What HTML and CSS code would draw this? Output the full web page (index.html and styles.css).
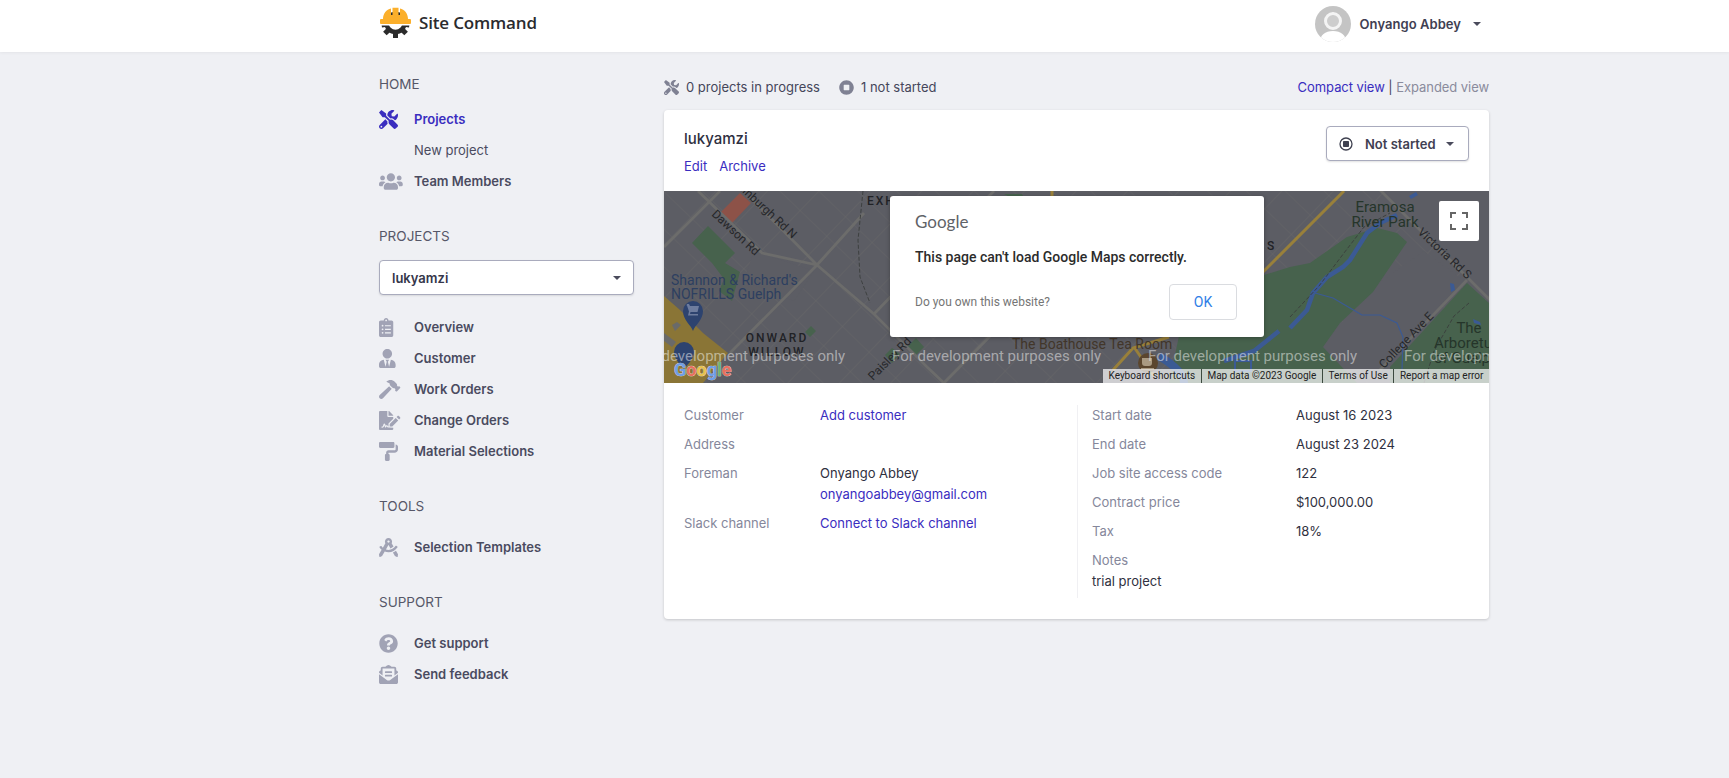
FILE: index.html
```html
<!DOCTYPE html>
<html lang="en">
<head>
  <meta charset="UTF-8" />
  <meta name="viewport" content="width=device-width, initial-scale=1.0" />
  <title>Site Command</title>
  <link rel="stylesheet" href="styles.css">
</head>
<body>
  <!-- icon sprite -->
  <svg class="sprite" xmlns="http://www.w3.org/2000/svg">
    <symbol id="i-tools" viewBox="0 0 512 512" preserveAspectRatio="xMinYMid meet"><path d="M501.1 395.7L384 278.6c-23.1-23.1-57.6-27.6-85.4-13.9L192 158.1V96L64 0 0 64l96 128h62.1l106.6 106.6c-13.6 27.8-9.2 62.3 13.9 85.4l117.1 117.1c14.6 14.6 38.2 14.6 52.7 0l52.7-52.7c14.5-14.6 14.5-38.2 0-52.7zM331.7 225c28.3 0 54.9 11 74.9 31l19.4 19.4c15.8-6.9 30.8-16.5 43.8-29.5 37.1-37.1 49.7-89.3 37.9-136.7-2.2-9-13.5-12.1-20.1-5.5l-74.4 74.4-67.9-11.3L334 98.9l74.4-74.4c6.6-6.6 3.4-17.9-5.7-20.2-47.4-11.7-99.6.9-136.6 37.9-28.5 28.5-41.9 66.1-41.2 103.6l82.1 82.1c8.1-1.9 16.5-2.9 24.7-2.9zm-103.9 82l-56.7-56.7L18.7 402.8c-25 25-25 65.5 0 90.5s65.5 25 90.5 0l123.6-123.6c-7.6-19.9-9.9-41.6-5-62.7zM64 472c-13.2 0-24-10.8-24-24 0-13.3 10.7-24 24-24s24 10.7 24 24c0 13.2-10.7 24-24 24z"/></symbol>
    <symbol id="i-users" viewBox="0 0 640 512" preserveAspectRatio="xMinYMid meet"><path d="M96 224c35.3 0 64-28.7 64-64s-28.7-64-64-64-64 28.7-64 64 28.7 64 64 64zm448 0c35.3 0 64-28.7 64-64s-28.7-64-64-64-64 28.7-64 64 28.7 64 64 64zm32 32h-64c-17.6 0-33.5 7.1-45.1 18.6 40.3 22.1 68.9 62 75.1 109.4h66c17.7 0 32-14.3 32-32v-32c0-35.3-28.7-64-64-64zm-256 0c61.9 0 112-50.1 112-112S381.9 32 320 32 208 82.1 208 144s50.1 112 112 112zm76.8 32h-8.3c-20.8 10-43.9 16-68.5 16s-47.6-6-68.5-16h-8.3C179.6 288 128 339.6 128 403.2V432c0 26.5 21.5 48 48 48h288c26.5 0 48-21.5 48-48v-28.8c0-63.6-51.6-115.2-115.2-115.2zm-223.7-13.4C161.5 263.1 145.6 256 128 256H64c-35.3 0-64 28.7-64 64v32c0 17.7 14.3 32 32 32h65.9c6.3-47.4 34.9-87.3 75.2-109.4z"/></symbol>
    <symbol id="i-clipboard" viewBox="0 0 384 512" preserveAspectRatio="xMinYMid meet"><path d="M336 64h-80c0-35.3-28.7-64-64-64s-64 28.7-64 64H48C21.5 64 0 85.5 0 112v352c0 26.5 21.5 48 48 48h288c26.5 0 48-21.5 48-48V112c0-26.5-21.5-48-48-48zM96 424c-13.3 0-24-10.7-24-24s10.7-24 24-24 24 10.7 24 24-10.7 24-24 24zm0-96c-13.3 0-24-10.7-24-24s10.7-24 24-24 24 10.7 24 24-10.7 24-24 24zm0-96c-13.3 0-24-10.7-24-24s10.7-24 24-24 24 10.7 24 24-10.7 24-24 24zm96-192c13.3 0 24 10.7 24 24s-10.7 24-24 24-24-10.7-24-24 10.7-24 24-24zm128 368c0 4.4-3.6 8-8 8H168c-4.4 0-8-3.6-8-8v-16c0-4.4 3.6-8 8-8h144c4.4 0 8 3.6 8 8v16zm0-96c0 4.4-3.6 8-8 8H168c-4.4 0-8-3.6-8-8v-16c0-4.4 3.6-8 8-8h144c4.4 0 8 3.6 8 8v16zm0-96c0 4.4-3.6 8-8 8H168c-4.4 0-8-3.6-8-8v-16c0-4.4 3.6-8 8-8h144c4.4 0 8 3.6 8 8v16z"/></symbol>
    <symbol id="i-user-tie" viewBox="0 0 448 512" preserveAspectRatio="xMinYMid meet"><path d="M224 256c70.7 0 128-57.3 128-128S294.7 0 224 0 96 57.3 96 128s57.3 128 128 128zm95.8 32.6L272 480l-32-136 32-56h-96l32 56-32 136-47.8-191.4C56.9 292 0 350.3 0 422.4V464c0 26.5 21.5 48 48 48h352c26.5 0 48-21.5 48-48v-41.6c0-72.1-56.9-130.4-128.2-133.8z"/></symbol>
    <symbol id="i-hammer" viewBox="0 0 576 512" preserveAspectRatio="xMinYMid meet"><path d="M571.31 193.94l-22.63-22.63c-6.25-6.25-16.38-6.25-22.63 0l-11.31 11.31-28.9-28.9c5.63-21.31.36-44.9-16.35-61.61l-45.25-45.25c-62.48-62.48-163.79-62.48-226.28 0l90.51 45.25v18.75c0 16.97 6.74 33.25 18.75 45.25l49.14 49.14c16.71 16.71 40.3 21.98 61.61 16.35l28.9 28.9-11.31 11.31c-6.25 6.25-6.25 16.38 0 22.63l22.63 22.63c6.25 6.25 16.38 6.25 22.63 0l90.51-90.51c6.23-6.24 6.23-16.37-.02-22.62zm-286.72-15.2c-3.7-3.7-6.84-7.79-9.85-11.95L19.64 404.96c-25.57 23.88-26.26 64.19-1.53 88.93s65.05 24.05 88.93-1.53l238.13-255.07c-3.96-2.91-7.9-5.87-11.44-9.41l-49.14-49.14z"/></symbol>
    <symbol id="i-file-sign" viewBox="0 0 576 512" preserveAspectRatio="xMinYMid meet"><path d="M218.17 424.14c-2.95-5.92-8.09-6.52-10.17-6.52s-7.22.59-10.02 6.19l-7.67 15.34c-6.37 12.78-25.03 11.37-29.48-2.09L144 386.59l-10.61 31.88c-5.89 17.66-22.38 29.53-41 29.53H80c-8.84 0-16-7.16-16-16s7.16-16 16-16h12.39c4.83 0 9.11-3.08 10.64-7.66l18.19-54.64c3.3-9.81 12.44-16.41 22.78-16.41s19.48 6.59 22.77 16.41l13.88 41.64c19.75-16.19 54.06-9.7 66 14.16 1.89 3.78 5.49 5.95 9.36 6.26v-82.12l128-127.09V160H248c-13.2 0-24-10.8-24-24V0H24C10.7 0 0 10.7 0 24v464c0 13.3 10.7 24 24 24h336c13.3 0 24-10.7 24-24v-40l-128-.11c-16.12-.31-30.58-9.28-37.83-23.75zM384 121.9c0-6.3-2.5-12.4-7-16.9L279.1 7c-4.5-4.5-10.6-7-17-7H256v128h128v-6.1zm-96 225.06V416h68.99l161.68-162.78-67.88-67.88L288 346.96zm280.54-179.63l-31.87-31.87c-9.94-9.94-26.07-9.94-36.01 0l-27.25 27.25 67.88 67.88 27.25-27.25c9.95-9.94 9.95-26.07 0-36.01z"/></symbol>
    <symbol id="i-roller" viewBox="0 0 512 512" preserveAspectRatio="xMinYMid meet"><path d="M416 128V32c0-17.67-14.33-32-32-32H32C14.33 0 0 14.33 0 32v96c0 17.67 14.33 32 32 32h352c17.67 0 32-14.33 32-32zm32-64v128c0 17.67-14.33 32-32 32H256c-35.35 0-64 28.65-64 64v32c-17.67 0-32 14.33-32 32v128c0 17.67 14.33 32 32 32h64c17.67 0 32-14.33 32-32V352c0-17.67-14.33-32-32-32v-32h160c53.02 0 96-42.98 96-96v-64c0-35.35-28.65-64-64-64z"/></symbol>
    <symbol id="i-compass" viewBox="0 0 512 512" preserveAspectRatio="xMinYMid meet"><path d="M457.01 344.42c-25.05 20.33-52.63 37.18-82.54 49.05l54.38 94.19 53.95 23.04c9.81 4.19 20.89-2.21 22.17-12.8l7.02-58.25-54.98-95.23zm42.49-94.56c4.86-7.67 1.89-17.99-6.05-22.39l-28.07-15.57c-7.48-4.15-16.61-1.46-21.26 5.72C403.01 281.15 332.25 320 256 320c-23.93 0-47.23-4.25-69.41-11.53l67.36-116.68c.7.02 1.34.21 2.04.21s1.35-.19 2.04-.21l51.09 88.5c31.23-8.96 59.56-25.75 82.61-48.92l-51.79-89.71C347.39 128.03 352 112.63 352 96c0-53.02-42.98-96-96-96s-96 42.98-96 96c0 16.63 4.61 32.03 12.05 45.66l-68.3 118.31c-12.55-11.61-23.96-24.59-33.68-39-4.79-7.1-13.97-9.62-21.38-5.33l-27.75 16.07c-7.85 4.54-10.63 14.9-5.64 22.47 15.57 23.64 34.69 44.21 55.98 62.02L0 439.66l7.02 58.25c1.28 10.59 12.36 16.99 22.17 12.8l53.95-23.04 70.8-122.63C186.13 377.99 220.62 384 256 384c99.05 0 190.88-51.01 243.5-134.14zM256 64c17.67 0 32 14.33 32 32s-14.33 32-32 32-32-14.33-32-32 14.33-32 32-32z"/></symbol>
    <symbol id="i-question" viewBox="0 0 512 512" preserveAspectRatio="xMinYMid meet"><path d="M504 256c0 136.997-111.043 248-248 248S8 392.997 8 256C8 119.083 119.043 8 256 8s248 111.083 248 248zM262.655 90c-54.497 0-89.255 22.957-116.549 63.758-3.536 5.286-2.353 12.415 2.715 16.258l34.699 26.31c5.205 3.947 12.621 3.008 16.665-2.122 17.864-22.658 30.113-35.797 57.303-35.797 20.429 0 45.698 13.148 45.698 32.958 0 14.976-12.363 22.667-32.534 33.976C247.128 238.528 216 254.941 216 296v4c0 6.627 5.373 12 12 12h56c6.627 0 12-5.373 12-12v-1.333c0-28.462 83.186-29.647 83.186-106.667 0-58.002-60.165-102-116.531-102zM256 338c-25.365 0-46 20.635-46 46 0 25.364 20.635 46 46 46s46-20.636 46-46c0-25.365-20.635-46-46-46z"/></symbol>
    <symbol id="i-envelope" viewBox="0 0 512 512" preserveAspectRatio="xMinYMid meet"><path d="M176 216h160c8.84 0 16-7.16 16-16v-16c0-8.84-7.16-16-16-16H176c-8.84 0-16 7.16-16 16v16c0 8.84 7.16 16 16 16zm-16 80c0 8.84 7.16 16 16 16h160c8.84 0 16-7.16 16-16v-16c0-8.84-7.16-16-16-16H176c-8.84 0-16 7.16-16 16v16zm96 121.13c-16.42 0-32.84-5.06-46.86-15.19L0 250.86V464c0 26.51 21.49 48 48 48h416c26.51 0 48-21.49 48-48V250.86L302.86 401.94c-14.02 10.12-30.44 15.19-46.86 15.19zm237.61-254.18c-8.85-6.94-17.24-13.47-29.61-22.81V96c0-26.51-21.49-48-48-48h-77.55c-3.04-2.2-5.87-4.26-9.04-6.56C312.6 29.17 279.2-.35 256 0c-23.2-.35-56.59 29.17-73.41 41.44-3.17 2.3-6 4.36-9.04 6.56H96c-26.51 0-48 21.49-48 48v44.14c-12.37 9.33-20.76 15.87-29.61 22.81A47.995 47.995 0 0 0 0 200.72v10.65l96 69.35V96h320v184.72l96-69.35v-10.65c0-14.74-6.78-28.67-18.39-37.77z"/></symbol>
    <symbol id="i-stop" viewBox="0 0 512 512" preserveAspectRatio="xMinYMid meet"><path d="M256 8C119 8 8 119 8 256s111 248 248 248 248-111 248-248S393 8 256 8zm96 328c0 8.8-7.2 16-16 16H176c-8.8 0-16-7.2-16-16V176c0-8.8 7.2-16 16-16h160c8.8 0 16 7.2 16 16v160z"/></symbol>
  </svg>

  <header class="topbar">
    <div class="topbar-inner">
      <a class="brand" href="#">
        <svg class="brand-logo" viewBox="0 0 31 31">
          <circle cx="15.5" cy="16" r="9" fill="none" stroke="#2b2b2b" stroke-width="4.500"/>
          <g fill="#2b2b2b">
            <rect x="13" y="25" width="5" height="6"/>
            <rect x="13" y="25" width="5" height="6" transform="rotate(45 15.5 16)"/>
            <rect x="13" y="25" width="5" height="6" transform="rotate(-45 15.5 16)"/>
            <rect x="13" y="25" width="5" height="5" transform="rotate(82 15.5 16)"/>
            <rect x="13" y="25" width="5" height="5" transform="rotate(-82 15.5 16)"/>
          </g>
          <rect x="0" y="17" width="31" height="1.500" fill="#fff"/>
          <path d="M3 12C3 6.500 6.500 2.500 11 1.500V8h1.500V.8h6V8H20V1.500C24.500 2.500 28 6.500 28 12z" fill="#fbaf2b"/>
          <rect x="0" y="12" width="31" height="5" rx="1" fill="#fbaf2b"/>
        </svg>
        <span>Site Command</span>
      </a>
      <div class="user">
        <svg class="avatar" viewBox="0 0 36 36">
          <clipPath id="avatar-clip"><circle cx="18" cy="18" r="18"/></clipPath>
          <g clip-path="url(#avatar-clip)">
            <rect width="36" height="36" fill="#c4c4c4"/>
            <path d="M5 36c0-7 5-11 13-11s13 4 13 11z" fill="#fff"/>
            <circle cx="18" cy="15" r="7.500" fill="#cdcdcd" stroke="#f4f4f4" stroke-width="3"/>
          </g>
        </svg>
        <span class="user-name">Onyango Abbey</span>
        <span class="caret"></span>
      </div>
    </div>
  </header>

  <div class="layout">
    <aside class="sidebar">
      <h4 class="side-title first">HOME</h4>
      <a class="side-link active" href="#"><svg class="side-icon"><use href="#i-tools"/></svg>Projects</a>
      <a class="side-link sub" href="#">New project</a>
      <a class="side-link" href="#"><svg class="side-icon"><use href="#i-users"/></svg>Team Members</a>

      <h4 class="side-title">PROJECTS</h4>
      <div class="project-select"><span>lukyamzi</span><span class="caret"></span></div>
      <a class="side-link" href="#"><svg class="side-icon"><use href="#i-clipboard"/></svg>Overview</a>
      <a class="side-link" href="#"><svg class="side-icon"><use href="#i-user-tie"/></svg>Customer</a>
      <a class="side-link" href="#"><svg class="side-icon"><use href="#i-hammer"/></svg>Work Orders</a>
      <a class="side-link" href="#"><svg class="side-icon"><use href="#i-file-sign"/></svg>Change Orders</a>
      <a class="side-link" href="#"><svg class="side-icon"><use href="#i-roller"/></svg>Material Selections</a>

      <h4 class="side-title spaced">TOOLS</h4>
      <a class="side-link" href="#"><svg class="side-icon"><use href="#i-compass"/></svg>Selection Templates</a>

      <h4 class="side-title spaced">SUPPORT</h4>
      <a class="side-link" href="#"><svg class="side-icon"><use href="#i-question"/></svg>Get support</a>
      <a class="side-link" href="#"><svg class="side-icon"><use href="#i-envelope"/></svg>Send feedback</a>
    </aside>

    <main class="content">
      <div class="status-row">
        <div class="status-counts">
          <svg class="count-icon"><use href="#i-tools"/></svg><span class="count">0 projects in progress</span>
          <svg class="count-icon second"><use href="#i-stop"/></svg><span>1 not started</span>
        </div>
        <div class="view-switch"><a href="#">Compact view</a> | <span class="muted">Expanded view</span></div>
      </div>

      <section class="card">
        <div class="card-head">
          <div>
            <h3 class="card-title">lukyamzi</h3>
            <div class="card-actions"><a href="#">Edit</a><a href="#">Archive</a></div>
          </div>
          <button class="status-btn">
            <svg class="status-icon" viewBox="0 0 14 14">
              <circle cx="7" cy="7" r="6" fill="none" stroke="#3f4150" stroke-width="1.300"/>
              <rect x="4" y="4" width="6" height="6" rx=".8" fill="#3f4150"/>
            </svg>
            Not started
            <span class="caret"></span>
          </button>
        </div>

        <div class="map">
          <svg class="map-canvas" viewBox="0 0 825 192" width="825" height="192">
            <defs>
              <pattern id="streets" width="37" height="27" patternUnits="userSpaceOnUse" patternTransform="rotate(44)">
                <path d="M0 0H37M0 0V27" stroke="#666667" stroke-width="1.200" fill="none"/>
              </pattern>
            </defs>
            <rect width="825" height="192" fill="#5c5d64"/>
            <rect width="825" height="192" fill="url(#streets)"/>

            <!-- plain blocks without streets -->
            <path d="M659 156L705 99 760 60 803 92 716 179 700 192H680zM720 0H825V100L760 40z" fill="#5c5d64"/>
            <path d="M90 60L150 80 130 110 80 90zM240 20L330 5 350 60 280 80z" fill="#5c5d64"/>

            <!-- parks -->
            <g fill="#47624d">
              <path d="M44 35L71 62 61 72 76 81 68 110 55 100 60 88 48 72 28 52z"/>
              <path d="M147 135l5 5-6 6-5-5zM252 147l8 9-9 9-8-9z"/>
              <path d="M626 76L646 72 683 46 713 37 733 42 743 51 709 101 676 132 659 156 693 192H505L515 145 550 132 590 110 600 84z"/>
              <path d="M803 92L825 112V192H726V176z"/>
              <path d="M221 164l7-7 8 6-8 9z"/>
              <path d="M340 3h18l4 8-6 0z"/>
            </g>

            <!-- shopping area -->
            <path d="M0 105L16 119 39 142 64 162 39 192H0z" fill="#8a7536"/>
            <path d="M8 134l5-3 4 3-6 6zM0 142l12 9-4 5-8-6z" fill="#6a6a69"/>
            <path d="M57 21L76 2 87 12 68 32z" fill="#8d5248"/>

            <!-- main roads -->
            <g fill="none" stroke="#6c6c6b" stroke-width="2.800">
              <path d="M34 0L98 62 153 74M86 6L153 74 210 123 263 176 280 192"/>
              <path d="M66 162L153 74 200 22M0 56L56 0"/>
              <path d="M716 -1L826 109M716 179L803 89"/>
              <path d="M210 123L290 40 330 0M280 192L400 70"/>
            </g>

            <!-- yellow roads -->
            <g fill="none" stroke="#99803a" stroke-width="3">
              <path d="M680 0L596 84M388 0V8"/>
              <path d="M505 146L469 157 449 179"/>
              <path d="M470 156L490 185"/>
            </g>

            <!-- river -->
            <g fill="none" stroke="#3b5a94">
              <path d="M626 137L643 119 649 102 663 86 679 76 686 69 703 42 716 32 733 24" stroke-width="4.500"/>
              <path d="M651 102L669 107 686 117 698 124 716 124 733 132 739 146 738 179" stroke-width="1.200"/>
              <path d="M560 170L590 160 615 140" stroke-width="4.500"/>
              <path d="M495 165Q520 180 520 192" stroke-width="8"/>
              <path d="M571 170h16v10h-16z" stroke-width="2"/>
            </g>
            <path d="M786 92l4 1 1 6-4 2zM809 128l7 3 1 3-7-2zM745 5l7-4 2 3-7 4z" fill="#3b5a94"/>

            <!-- trails and rail line -->
            <g fill="none" stroke="#3a3d3c" stroke-width=".9" stroke-dasharray="4 2">
              <path d="M199 0L194 49 196 86 206 112"/>
              <path d="M626 126L655 95 680 62 700 36 726 22"/>
              <path d="M760 192L770 160 790 125 805 112"/>
            </g>

            <!-- labels -->
            <g class="map-label">
              <text class="area" x="203" y="14">EXHIBITION</text>
              <text class="area" x="603" y="59">S</text>
              <text class="area" x="113" y="151" text-anchor="middle">ONWARD</text>
              <text class="area" x="113" y="165" text-anchor="middle">WILLOW</text>
              <text class="road" transform="translate(68 -8) rotate(43)">Edinburgh Rd N</text>
              <text class="road" transform="translate(47 24) rotate(43)">Dawson Rd</text>
              <text class="road" transform="translate(209 190) rotate(-45)">Paisley Rd</text>
              <text class="road" transform="translate(753 42) rotate(43)">Victoria Rd S</text>
              <text class="road" transform="translate(720 178) rotate(-46)">College Ave E</text>
              <text class="shop" x="7" y="94">Shannon &amp; Richard's</text>
              <text class="shop" x="7" y="108">NOFRILLS Guelph</text>
              <text class="cafe" x="348" y="158">The Boathouse Tea Room</text>
              <text class="park" x="721" y="21" text-anchor="middle">Eramosa</text>
              <text class="park" x="721" y="36" text-anchor="middle">River Park</text>
              <text class="park" x="805" y="142" text-anchor="middle">The</text>
              <text class="park" x="770" y="157">Arboretum</text>
              <text class="park" x="770" y="172">of Guelph</text>
            </g>

            <!-- pins -->
            <path d="M29 140c-2-6-10-11-10-20a10 10 0 0 1 20 0c0 9-8 14-10 20z" fill="#2d436f"/>
            <path d="M23 113h2l1 2h9l-1.500 6h-7l-.5 2h8v1.500h-10l1-4-2-6h-.5z" fill="#6d7c9e"/>
            <path d="M20 179c-2-5-10-10-10-18a10 10 0 0 1 20 0c0 8-8 13-10 18z" fill="#2d436f"/>
            <circle cx="484" cy="172" r="10" fill="#5b462e"/>
            <path d="M478 167h10v5a3 3 0 0 1-3 3h-4a3 3 0 0 1-3-3zM477 177h13v1.500h-13z" fill="#a99a82"/>

            <!-- development watermark -->
            <g class="watermark">
              <text x="-28" y="170">For development purposes only</text>
              <text x="228" y="170">For development purposes only</text>
              <text x="484" y="170">For development purposes only</text>
              <text x="740" y="170">For development purposes only</text>
            </g>

            <!-- logo -->
            <text class="map-logo" x="10" y="185"><tspan fill="#6f9ee8">G</tspan><tspan fill="#e8705f">o</tspan><tspan fill="#e8c24c">o</tspan><tspan fill="#6f9ee8">g</tspan><tspan fill="#69b573">l</tspan><tspan fill="#e8705f">e</tspan></text>
          </svg>

          <div class="map-footer">
            <span>Keyboard shortcuts</span>
            <span>Map data ©2023 Google</span>
            <span>Terms of Use</span>
            <span>Report a map error</span>
          </div>

          <button class="map-fullscreen" aria-label="Toggle fullscreen view">
            <svg viewBox="0 0 18 18" width="18" height="18"><path d="M0 6V0h6v2H2v4zM12 0h6v6h-2V2h-4zM18 12v6h-6v-2h4v-4zM6 18H0v-6h2v4h4z" fill="#666"/></svg>
          </button>

          <div class="map-dialog">
            <div class="dialog-logo">Google</div>
            <div class="dialog-title">This page can't load Google Maps correctly.</div>
            <div class="dialog-foot">
              <span class="dialog-own">Do you own this website?</span>
              <button class="dialog-ok">OK</button>
            </div>
          </div>
        </div>

        <div class="details">
          <div class="details-col left">
            <div class="detail"><span class="label">Customer</span><a href="#">Add customer</a></div>
            <div class="detail"><span class="label">Address</span><span></span></div>
            <div class="detail">
              <span class="label">Foreman</span>
              <div><div class="value">Onyango Abbey</div><a href="#">onyangoabbey@gmail.com</a></div>
            </div>
            <div class="detail"><span class="label">Slack channel</span><a href="#">Connect to Slack channel</a></div>
          </div>
          <div class="details-col right">
            <div class="detail"><span class="label">Start date</span><span class="value">August 16 2023</span></div>
            <div class="detail"><span class="label">End date</span><span class="value">August 23 2024</span></div>
            <div class="detail"><span class="label">Job site access code</span><span class="value">122</span></div>
            <div class="detail"><span class="label">Contract price</span><span class="value">$100,000.00</span></div>
            <div class="detail"><span class="label">Tax</span><span class="value">18%</span></div>
            <div class="notes"><div class="label">Notes</div><div class="value">trial project</div></div>
          </div>
        </div>
      </section>
    </main>
  </div>
</body>
</html>
```

FILE: styles.css
```css
body {
  margin: 0;
  min-height: 778px;
  font-family: Inter, "Noto Sans", sans-serif;
  font-size: 13px;
  line-height: 21px;
  background: #eff0f4;
  color: #35364a;
}
a {
  color: #3a2dbf;
  text-decoration: none;
}
h3, h4 {
  margin: 0;
}
button {
  font-family: inherit;
  cursor: pointer;
}
.sprite {
  display: none;
}
.caret {
  display: inline-block;
  width: 0;
  height: 0;
  border-left: 4.5px solid transparent;
  border-right: 4.5px solid transparent;
  border-top: 4.5px solid #4a4b5c;
}

/* Top bar */
.topbar {
  height: 52px;
  background: white;
  box-shadow: 0 1px 3px rgba(0, 0, 0, 0.05);
}
.topbar-inner {
  width: 1111px;
  height: 100%;
  margin-left: 379px;
  display: flex;
  justify-content: space-between;
  align-items: center;
}
.brand {
  display: flex;
  align-items: center;
  gap: 8px;
  padding-left: 1px;
  padding-bottom: 8px;
  margin-top: 1px;
  font-family: "Open Sans", sans-serif;
  font-size: 17px;
  font-weight: 600;
  letter-spacing: -0.17px;
  color: #2b2b2e;
}
.brand-logo {
  width: 31px;
  height: 31px;
}
.user {
  display: flex;
  align-items: center;
  padding-right: 9px;
  margin-bottom: 4px;
}
.avatar {
  width: 36px;
  height: 36px;
  margin-right: 9px;
}
.user-name {
  font-weight: 600;
  letter-spacing: 0.05px;
  color: #3f4052;
  margin-right: 12px;
}

/* Sidebar + content */
.layout {
  width: 1110px;
  margin-left: 379px;
  display: grid;
  grid-template-columns: 255px 825px;
  column-gap: 30px;
}
.side-title {
  height: 20px;
  line-height: 20px;
  margin-top: 29px;
  margin-bottom: 14px;
  font-size: 13.5px;
  font-weight: 400;
  color: #565768;
}
.side-title.first {
  margin-top: 22px;
  margin-bottom: 10px;
}
.side-title.spaced {
  margin-bottom: 16px;
}
.side-link {
  display: flex;
  align-items: center;
  height: 31px;
  font-weight: 600;
  color: #4a4b5f;
}
.side-link.active {
  color: #3a2dbf;
}
.side-link.sub {
  padding-left: 35px;
  font-weight: 400;
}
.side-icon {
  width: 24px;
  height: 19px;
  margin-right: 11px;
  flex: none;
  fill: #a1a3b5;
}
.side-link.active .side-icon {
  fill: #3a2dbf;
}
.project-select {
  box-sizing: border-box;
  height: 35px;
  margin-bottom: 17px;
  padding: 1px 12px 0;
  display: flex;
  justify-content: space-between;
  align-items: center;
  background: white;
  border: 1px solid #a9abbd;
  border-radius: 4px;
  box-shadow: 0 1px 2px rgba(0, 0, 0, 0.1);
  font-weight: 600;
}

/* Status row */
.status-row {
  height: 20px;
  margin: 25px 0 13px;
  display: flex;
  justify-content: space-between;
  align-items: center;
}
.status-counts {
  display: flex;
  align-items: center;
  color: #45465a;
}
.count-icon {
  width: 15px;
  height: 15px;
  margin-right: 7px;
  fill: #7f8193;
}
.count-icon.second {
  margin-left: 19px;
  margin-right: 7px;
}
.view-switch {
  letter-spacing: -0.06px;
  color: #45465a;
}
.muted {
  color: #8a8b9c;
}

/* Card */
.card {
  background: white;
  border-radius: 4px;
  box-shadow: 0 1px 3px rgba(0, 0, 0, 0.18);
  overflow: hidden;
}
.card-head {
  box-sizing: border-box;
  height: 81px;
  padding: 17px 20px 0;
  display: flex;
  justify-content: space-between;
  align-items: flex-start;
}
.card-title {
  font-size: 15px;
  line-height: 24px;
  font-weight: 500;
  color: #2e2f40;
}
.card-actions {
  display: flex;
  gap: 12px;
  margin-top: 5px;
}
.status-btn {
  width: 143px;
  height: 35px;
  margin-top: -1px;
  padding: 0 0 0 12px;
  display: flex;
  align-items: center;
  background: white;
  border: 1px solid #a9abbd;
  border-radius: 4px;
  box-shadow: 0 1px 2px rgba(0, 0, 0, 0.12);
  font-size: 13px;
  font-weight: 600;
  color: #3f4052;
}
.status-icon {
  width: 14px;
  height: 14px;
  margin-right: 12px;
}
.status-btn .caret {
  margin-left: 10px;
}

/* Map */
.map {
  position: relative;
  height: 192px;
  overflow: hidden;
  font-family: Roboto, sans-serif;
}
.map-canvas {
  display: block;
}
.map-label text {
  font-family: Roboto, sans-serif;
}
.map-label .area {
  font-size: 12px;
  font-weight: 500;
  letter-spacing: 2px;
  fill: #212226;
}
.map-label .road {
  font-size: 12px;
  fill: #26272a;
}
.map-label .shop {
  font-size: 14px;
  fill: #2d3f60;
}
.map-label .cafe {
  font-size: 14px;
  fill: #42362a;
}
.map-label .park {
  font-size: 15px;
  fill: #25352a;
}
.watermark text {
  font-family: Roboto, sans-serif;
  font-size: 15px;
  fill: rgba(255, 255, 255, 0.48);
}
.map-logo {
  font-family: Roboto, sans-serif;
  font-size: 18px;
  font-weight: 700;
  stroke: rgba(255, 255, 255, 0.85);
  stroke-width: 0.6px;
  paint-order: stroke;
}
.map-footer {
  position: absolute;
  right: 0;
  bottom: 0;
  height: 14px;
  display: flex;
  background: rgba(255, 255, 255, 0.7);
  font-size: 10px;
  line-height: 14px;
  color: #222;
}
.map-footer span {
  padding: 0 5.6px;
  border-left: 1px solid #3c4a3f;
}
.map-footer span:first-child {
  border-left: 0;
}
.map-fullscreen {
  position: absolute;
  top: 10px;
  right: 10px;
  width: 40px;
  height: 40px;
  padding: 0;
  display: flex;
  align-items: center;
  justify-content: center;
  background: white;
  border: 0;
  border-radius: 2px;
}
.map-dialog {
  position: absolute;
  left: 226px;
  top: 5px;
  box-sizing: border-box;
  width: 374px;
  height: 141px;
  padding: 14px 27px 17px 25px;
  background: white;
  border-radius: 3px;
  box-shadow: 0 1px 4px rgba(0, 0, 0, 0.3);
}
.dialog-logo {
  font-family: Lato, sans-serif;
  font-size: 17px;
  line-height: 24px;
  color: #5f6368;
}
.dialog-title {
  margin-top: 13px;
  font-size: 14px;
  font-weight: 500;
  line-height: 20px;
  color: #2b2b2b;
}
.dialog-foot {
  margin-top: 17px;
  display: flex;
  justify-content: space-between;
  align-items: center;
}
.dialog-own {
  font-size: 12px;
  color: #757575;
}
.dialog-ok {
  width: 68px;
  height: 36px;
  padding: 0;
  background: white;
  border: 1px solid #dadce0;
  border-radius: 4px;
  font-family: Roboto, sans-serif;
  font-size: 14px;
  color: #2f7ee6;
}

/* Details */
.details {
  display: grid;
  grid-template-columns: 413px 1fr;
  padding: 22px 0 21px;
}
.details-col {
  display: flex;
  flex-direction: column;
  gap: 8px;
  height: 193px;
}
.details-col.left {
  padding-left: 20px;
}
.details-col.right {
  padding-left: 14px;
  border-left: 1px solid #f0f0f3;
}
.detail {
  display: flex;
}
.label {
  color: #85879b;
}
.left .label {
  width: 136px;
}
.right .label {
  width: 204px;
}
.notes .label {
  width: auto;
}
.value {
  color: #2f3040;
}
```
